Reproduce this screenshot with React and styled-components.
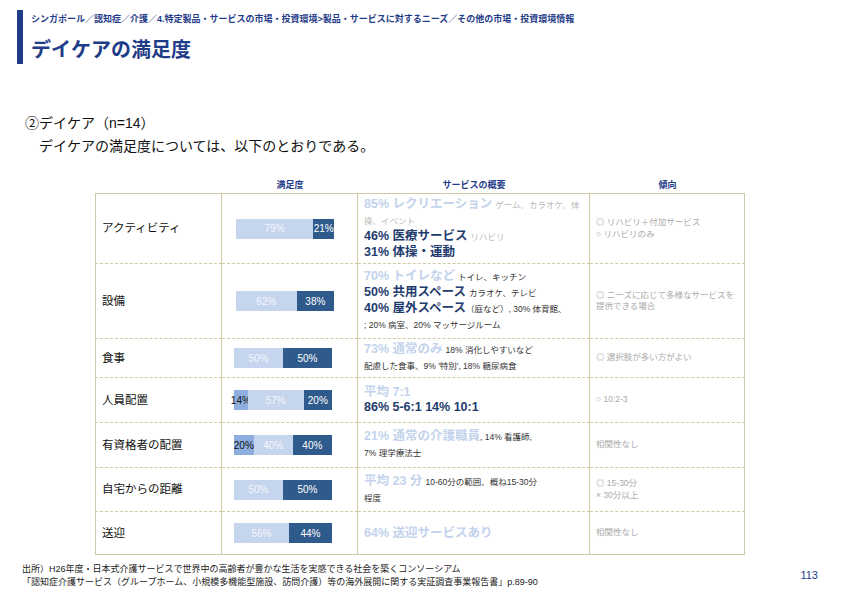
import React from 'react';
import styled, { createGlobalStyle } from 'styled-components';

const Global = createGlobalStyle`
  body { margin: 0; background: #fff; font-family: "Liberation Sans", "Noto Sans CJK JP", sans-serif; }
`;

const Page = styled.div`
  width: 842px;
  height: 595px;
  position: relative;
  overflow: hidden;
`;

const Header = styled.div`
  display: flex;
  margin: 10px 0 0 17px;
`;
const Accent = styled.div`
  width: 6px;
  height: 54px;
  background: #1f3c88;
  margin-right: 8px;
`;
const Crumb = styled.div`
  font-size: 9px;
  font-weight: bold;
  color: #1f3c88;
  margin-top: 2px;
`;
const Title = styled.h1`
  font-size: 20px;
  font-weight: bold;
  color: #1f3c88;
  margin: 9px 0 0;
`;
const Lead = styled.div`
  margin: 48px 0 0 25px;
  font-size: 14px;
  color: #111;
  line-height: 23px;
`;
const Indent = styled.div`
  padding-left: 14px;
`;

const Table = styled.div`
  margin: 20px 0 0 95px;
  width: 650px;
  display: grid;
  grid-template-columns: 127px 136px 232px 155px;
`;
const Head = styled.div`
  font-size: 9px;
  font-weight: bold;
  color: #1f3c88;
  text-align: center;
  height: 15px;
`;
const Cell = styled.div`
  height: ${p => p.h}px;
  box-sizing: border-box;
  border-left: ${p => (p.first ? '1px solid #cfc9a8' : 'none')};
  border-right: 1px solid #cfc9a8;
  border-top: ${p => (p.top ? '1px solid #cfc9a8' : '1px dashed #cfc9a8')};
  border-bottom: ${p => (p.last ? '1px solid #cfc9a8' : 'none')};
  display: flex;
  flex-direction: column;
  justify-content: center;
  padding: 0 6px;
  font-size: ${p => p.fs || 11}px;
  color: ${p => p.color || '#111'};
  line-height: 1.3;
  overflow: hidden;
`;
const Line = styled.div`
  line-height: 15px;
`;
const Bar = styled.div`
  display: flex;
  width: 98px;
  height: 20px;
  margin-left: ${p => p.off}px;
`;
const Seg = styled.div`
  background: ${p => p.bg};
  color: ${p => p.fg};
  font-size: 10px;
  display: flex;
  align-items: center;
  justify-content: center;
  white-space: nowrap;
`;
const Big = styled.span`
  font-size: 12.5px;
  font-weight: bold;
  color: ${p => (p.light ? '#c3d3ec' : '#1f3c6e')};
`;
const Small = styled.span`
  font-size: 8.5px;
  color: ${p => (p.faint ? '#bbb' : '#333')};
`;

const LIGHT = '#c6d5ee', DARK = '#2f5a8c', MID = '#8eaee0';

const rows = [
  { name: 'アクティビティ', h: 70, bar: [[0, 79], [0, 21]], off: 8,
    svc: <>
      <Line><Big light>85% レクリエーション</Big> <Small faint>ゲーム、カラオケ、体操、イベント</Small></Line>
      <Line><Big>46% 医療サービス</Big> <Small faint>リハビリ</Small></Line>
      <Line><Big>31% 体操・運動</Big></Line>
    </>,
    trend: <><div>◎ リハビリ＋付加サービス</div><div>○ リハビリのみ</div></> },
  { name: '設備', h: 75, bar: [[0, 62], [0, 38]], off: 8,
    svc: <>
      <Line><Big light>70% トイレなど</Big> <Small>トイレ、キッチン</Small></Line>
      <Line><Big>50% 共用スペース</Big> <Small>カラオケ、テレビ</Small></Line>
      <Line><Big>40% 屋外スペース</Big><Small>（庭など）, 30% 体育館、</Small></Line>
      <Line><Small>; 20% 病室、20% マッサージルーム</Small></Line>
    </>,
    trend: <div>◎ ニーズに応じて多様なサービスを提供できる場合</div> },
  { name: '食事', h: 39, bar: [[0, 50], [0, 50]], off: 6,
    svc: <>
      <Line><Big light>73% 通常のみ</Big> <Small>18% 消化しやすいなど</Small></Line>
      <Line><Small>配慮した食事、9% '特別', 18% 糖尿病食</Small></Line>
    </>,
    trend: <div>◎ 選択肢が多い方がよい</div> },
  { name: '人員配置', h: 45, bar: [[1, 14], [0, 57], [0, 29]], labels: ['14%', '57%', '20%'], off: 6,
    svc: <><Line><Big light>平均 7:1</Big></Line><Line><Big>86% 5-6:1 14% 10:1</Big></Line></>,
    trend: <div>○ 10:2-3</div> },
  { name: '有資格者の配置', h: 45, bar: [[1, 20], [0, 40], [0, 40]], off: 6,
    svc: <>
      <Line><Big light>21% 通常の介護職員</Big><Small>, 14% 看護師,</Small></Line>
      <Line><Small>7% 理学療法士</Small></Line>
    </>,
    trend: <div>相関性なし</div> },
  { name: '自宅からの距離', h: 44, bar: [[0, 50], [0, 50]], off: 6,
    svc: <>
      <Line><Big light>平均 23 分</Big> <Small>10-60分の範囲、概ね15-30分</Small></Line>
      <Line><Small>程度</Small></Line>
    </>,
    trend: <><div>◎ 15-30分</div><div>× 30分以上</div></> },
  { name: '送迎', h: 44, bar: [[0, 56], [0, 44]], off: 6,
    svc: <Line><Big light>64% 送迎サービスあり</Big></Line>,
    trend: <div>相関性なし</div> },
];

function BarView({ r }) {
  const n = r.bar.length;
  return (
    <Bar off={r.off}>
      {r.bar.map(([mid, v], i) => {
        const last = i === n - 1;
        const bg = mid ? MID : last ? DARK : LIGHT;
        const fg = mid ? '#111' : last ? '#fff' : '#f4f7fc';
        const label = r.labels ? r.labels[i] : `${v}%`;
        return <Seg key={i} bg={bg} fg={fg} style={{ width: `${v}%` }}>{label}</Seg>;
      })}
    </Bar>
  );
}

const Footer = styled.div`
  position: absolute;
  left: 22px;
  bottom: 6px;
  font-size: 9px;
  color: #222;
  line-height: 13px;
`;
const PageNo = styled.div`
  position: absolute;
  right: 24px;
  bottom: 14px;
  font-size: 11px;
  color: #1f3c88;
`;

export default function App() {
  return (
    <Page>
      <Global />
      <Header>
        <Accent />
        <div>
          <Crumb>シンガポール／認知症／介護／4.特定製品・サービスの市場・投資環境&gt;製品・サービスに対するニーズ／その他の市場・投資環境情報</Crumb>
          <Title>デイケアの満足度</Title>
        </div>
      </Header>
      <Lead>
        <div>②デイケア（n=14）</div>
        <Indent>デイケアの満足度については、以下のとおりである。</Indent>
      </Lead>
      <Table>
        <Head />
        <Head>満足度</Head>
        <Head>サービスの概要</Head>
        <Head>傾向</Head>
        {rows.map((r, i) => {
          const p = { h: r.h, top: i === 0, last: i === rows.length - 1 };
          return (
            <React.Fragment key={r.name}>
              <Cell {...p} first fs={11.5}>{r.name}</Cell>
              <Cell {...p}><BarView r={r} /></Cell>
              <Cell {...p}>{r.svc}</Cell>
              <Cell {...p} fs={8.5} color="#aaa">{r.trend}</Cell>
            </React.Fragment>
          );
        })}
      </Table>
      <Footer>
        <div>出所）H26年度・日本式介護サービスで世界中の高齢者が豊かな生活を実感できる社会を築くコンソーシアム</div>
        <div>「認知症介護サービス（グループホーム、小規模多機能型施設、訪問介護）等の海外展開に関する実証調査事業報告書」p.89-90</div>
      </Footer>
      <PageNo>113</PageNo>
    </Page>
  );
}
